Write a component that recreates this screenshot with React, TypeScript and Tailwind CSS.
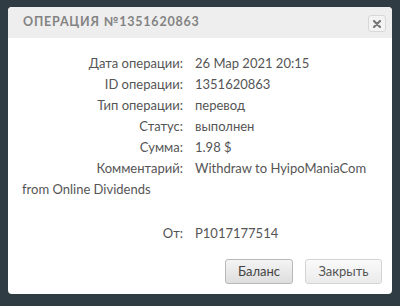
import React from "react";

const rows: [string, string][] = [
  ["Дата операции:", "26 Мар 2021 20:15"],
  ["ID операции:", "1351620863"],
  ["Тип операции:", "перевод"],
  ["Статус:", "выполнен"],
  ["Сумма:", "1.98 $"],
  ["Комментарий:", "Withdraw to HyipoManiaCom"],
];

export default function App() {
  return (
    <div
      className="w-[400px] h-[306px] bg-[#2f3c44] pt-[7px] pl-[8px] overflow-hidden"
      style={{ fontFamily: "Lato, 'Open Sans', sans-serif" }}
    >
      <div className="w-[384px] h-[287px] bg-white rounded-[4px] overflow-hidden flex flex-col">
        <div className="h-[31px] bg-[#eeeeee] flex items-center justify-between pl-[15px] pr-[6px]">
          <span className="text-[12.5px] font-bold tracking-[0.8px] text-[#838383] leading-none">
            ОПЕРАЦИЯ №1351620863
          </span>
          <div className="w-[18px] h-[17px] border border-[#d8d8d8] rounded-[3px] bg-[#f3f3f3] flex items-center justify-center mt-[2px]">
            <svg width="8" height="8" viewBox="0 0 8 8">
              <path d="M1 1 L7 7 M7 1 L1 7" stroke="#777" strokeWidth="2.2" strokeLinecap="round" />
            </svg>
          </div>
        </div>
        <div className="flex-1 flex flex-col pt-[15px] px-[14px] text-[13px] text-[#555] leading-[21px]">
          {rows.map(([l, v]) => (
            <div key={l} className="flex">
              <div className="w-[161px] text-right">{l}</div>
              <div className="pl-[12px]">{v}</div>
            </div>
          ))}
          <div>from Online Dividends</div>
          <div className="flex mt-[23px]">
            <div className="w-[161px] text-right">От:</div>
            <div className="pl-[12px]">P1017177514</div>
          </div>
          <div className="flex justify-end gap-[12px] mt-[15px]">
            <button className="w-[68px] h-[25px] rounded-[3px] border border-[#b8b8b8] bg-gradient-to-b from-[#f4f4f4] to-[#dedede] text-[13px] text-[#444]">
              Баланс
            </button>
            <button className="w-[77px] h-[25px] rounded-[3px] border border-[#d4d4d4] bg-gradient-to-b from-[#fafafa] to-[#ebebeb] text-[13px] text-[#555] mr-[-4px]">
              Закрыть
            </button>
          </div>
        </div>
      </div>
    </div>
  );
}
